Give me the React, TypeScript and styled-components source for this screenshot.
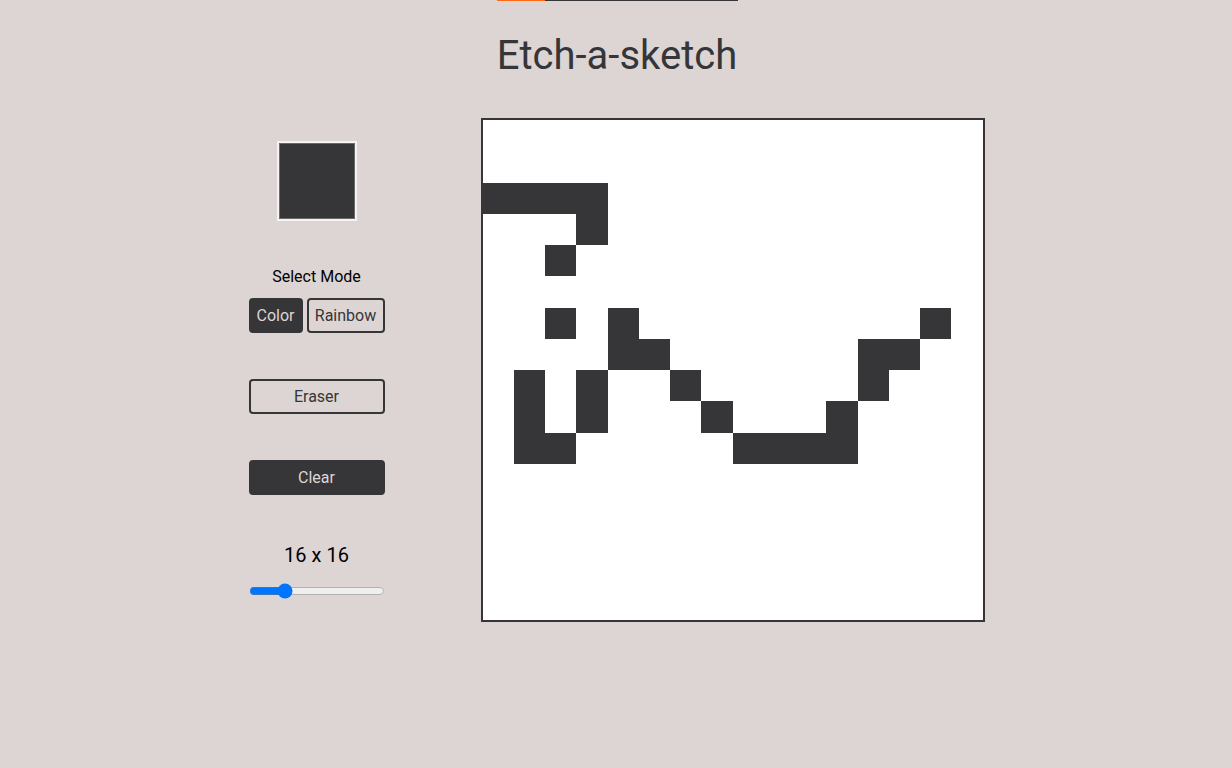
import { useState } from "react";
import styled, { createGlobalStyle } from "styled-components";

const GlobalStyle = createGlobalStyle`
  * { box-sizing: border-box; }
  body {
    margin: 0;
    background-color: #ddd5d4;
    font-family: Roboto, "Liberation Sans", sans-serif;
    color: #363638;
  }
`;

const TopBar = styled.div`
  width: 241px;
  height: 1px;
  margin: 0 auto 0 497px;
  display: flex;
`;

const BarPart = styled.div<{ $color: string; $width: number }>`
  width: ${(p) => p.$width}px;
  height: 100%;
  background-color: ${(p) => p.$color};
`;

const Title = styled.h1`
  margin: 31px 0 0;
  padding-left: 2px;
  text-align: center;
  font-size: 40px;
  font-weight: 400;
  line-height: 47px;
  color: #363638;
`;

const Main = styled.main`
  display: flex;
  justify-content: center;
  align-items: flex-start;
  gap: 96px;
  margin-top: 39px;
  padding-left: 1px;
`;

const Controls = styled.div`
  width: 136px;
  display: flex;
  flex-direction: column;
  align-items: center;
  padding-top: 23px;
`;

const Swatch = styled.div`
  width: 80px;
  height: 80px;
  padding: 2px;
  background-color: #f4f2f2;
`;

const SwatchInner = styled.div`
  width: 100%;
  height: 100%;
  border: 1px solid #6b6b6b;
  background-color: #363638;
`;

const Label = styled.div`
  margin-top: 46px;
  font-size: 16px;
  color: #000;
  line-height: 19px;
`;

const ModeRow = styled.div`
  display: flex;
  gap: 4px;
  margin-top: 12px;
`;

const Button = styled.button<{ $active?: boolean; $width?: number }>`
  width: ${(p) => (p.$width ? `${p.$width}px` : "136px")};
  height: 35px;
  border: 2px solid #363638;
  border-radius: 4px;
  background-color: ${(p) => (p.$active ? "#363638" : "transparent")};
  color: ${(p) => (p.$active ? "#ddd5d4" : "#363638")};
  font-family: Roboto, "Liberation Sans", sans-serif;
  font-size: 16px;
  padding: 0;
  cursor: pointer;
`;

const Spaced = styled.div<{ $top: number }>`
  margin-top: ${(p) => p.$top}px;
`;

const SizeLabel = styled.div`
  margin-top: 48px;
  font-size: 20px;
  line-height: 24px;
  color: #000;
`;

const Slider = styled.input`
  width: 136px;
  margin: 16px 0 0;
  accent-color: #0075ff;
`;

const Board = styled.div`
  width: 504px;
  height: 504px;
  border: 2px solid #363638;
  background-color: #fff;
  display: grid;
  grid-template-columns: repeat(16, 1fr);
  grid-template-rows: repeat(16, 1fr);
`;

const Cell = styled.div<{ $on: boolean }>`
  background-color: ${(p) => (p.$on ? "#363638" : "#fff")};
`;

const filled: [number, number][] = [
  [2, 0], [2, 1], [2, 2], [2, 3],
  [3, 3],
  [4, 2],
  [6, 2], [6, 4], [6, 14],
  [7, 4], [7, 5], [7, 12], [7, 13],
  [8, 1], [8, 3], [8, 6], [8, 12],
  [9, 1], [9, 3], [9, 7], [9, 11],
  [10, 1], [10, 2], [10, 8], [10, 9], [10, 10], [10, 11],
];

export default function App() {
  const [size, setSize] = useState(16);
  const on = new Set(filled.map(([r, c]) => r * 16 + c));

  return (
    <>
      <GlobalStyle />
      <TopBar>
        <BarPart $color="#ff6a13" $width={48} />
        <BarPart $color="#363638" $width={193} />
      </TopBar>
      <Title>Etch-a-sketch</Title>
      <Main>
        <Controls>
          <Swatch>
            <SwatchInner />
          </Swatch>
          <Label>Select Mode</Label>
          <ModeRow>
            <Button $active $width={54}>Color</Button>
            <Button $width={78}>Rainbow</Button>
          </ModeRow>
          <Spaced $top={46}>
            <Button>Eraser</Button>
          </Spaced>
          <Spaced $top={46}>
            <Button $active>Clear</Button>
          </Spaced>
          <SizeLabel>
            {size} x {size}
          </SizeLabel>
          <Slider
            type="range"
            min={1}
            max={64}
            value={size}
            onChange={(e) => setSize(Number(e.target.value))}
          />
        </Controls>
        <Board>
          {Array.from({ length: 256 }, (_, i) => (
            <Cell key={i} $on={on.has(i)} />
          ))}
        </Board>
      </Main>
    </>
  );
}
